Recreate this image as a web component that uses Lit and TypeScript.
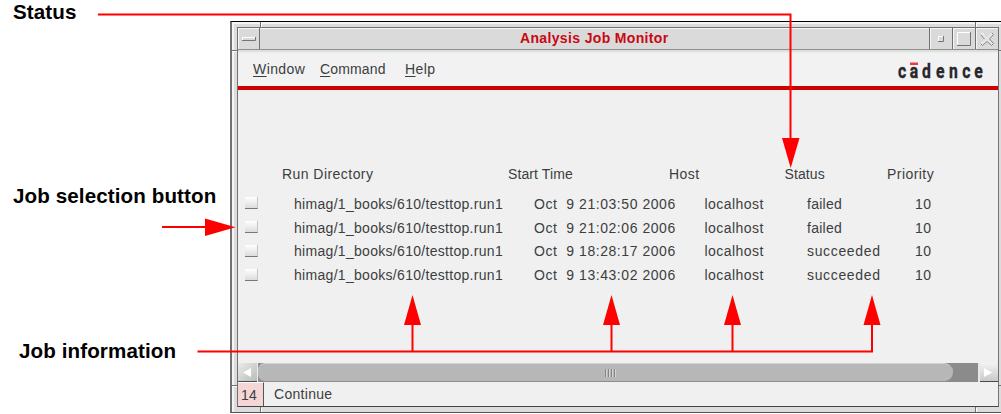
import { LitElement, html, svg, css } from "lit";
import { customElement } from "lit/decorators.js";

interface Job {
  dir: string;
  start: string;
  host: string;
  status: string;
  priority: number;
}

const JOBS: Job[] = [
  { dir: "himag/1_books/610/testtop.run1", start: "Oct  9 21:03:50 2006", host: "localhost", status: "failed", priority: 10 },
  { dir: "himag/1_books/610/testtop.run1", start: "Oct  9 21:02:06 2006", host: "localhost", status: "failed", priority: 10 },
  { dir: "himag/1_books/610/testtop.run1", start: "Oct  9 18:28:17 2006", host: "localhost", status: "succeeded", priority: 10 },
  { dir: "himag/1_books/610/testtop.run1", start: "Oct  9 13:43:02 2006", host: "localhost", status: "succeeded", priority: 10 },
];

@customElement("job-monitor")
class JobMonitor extends LitElement {
  static styles = css`
    :host {
      display: block;
      position: relative;
      box-sizing: border-box;
      height: 392px;
      border: 1px solid #555;
      border-width: 1px 0 1px 2px;
      border-top-color: #000;
      border-left-color: #707272;
      background: #dcdcdc;
      padding: 5px 2px 4px 5px;
      color: #3c3e40;
      font: 14px/16px "Liberation Sans", Arial, sans-serif;
      letter-spacing: 0.45px;
      box-shadow: inset 2px 2px 0 #f4f4f4;
    }
    .joints { position: absolute; left: 0; top: 0; }
    .inner {
      display: flex;
      position: relative;
      flex-direction: column;
      height: 380px;
      box-sizing: border-box;
      border: 1px solid #707272;
      border-bottom-color: #444;
      background: #f0f0f0;
    }
    .title {
      display: flex;
      height: 21px;
      flex: none;
      background: #d9dad9;
      border-bottom: 1px solid #8c918c;
      box-shadow: inset 1px 1px 0 #f5f5f5;
    }
    .tb {
      width: 22px;
      box-sizing: border-box;
      border-right: 1px solid #707272;
      box-shadow: inset 1px 1px 0 #f5f5f5;
    }
    .tb.r {
      width: 23px;
      border-right: 0;
      border-left: 1px solid #707272;
    }
    .tb svg { display: block; }
    .caption {
      flex: 1;
      padding-left: 260px;
      line-height: 21px;
      font-weight: bold;
      color: #c80812;
      letter-spacing: 0.35px;
      white-space: nowrap;
    }
    .menu {
      display: flex;
      height: 36px;
      flex: none;
      box-sizing: border-box;
      padding: 11px 11px 0 15px;
      background: #f2f2f3;
      box-shadow: inset 0 3px 2px -1px #dadcda;
    }
    .menu span { letter-spacing: 0.4px; }
    .window { width: 67px; }
    .command { width: 85px; }
    .menu .command { letter-spacing: 0.15px; }
    .help { flex: 1; }
    .menu u { text-underline-offset: 2px; text-decoration-thickness: 1px; }
    .logo { display: block; margin-top: -8px; overflow: visible; }
    .rule { height: 4px; flex: none; background: #cc0000; }
    .body { flex: 1; padding-top: 76px; }
    .row {
      display: grid;
      grid-template-columns: 56px 240px 170.500px 102.500px 108px 50px;
      height: 23.75px;
      align-items: center;
      white-space: pre;
    }
    .row.head {
      grid-template-columns: 44px 226px 161px 115.500px 102.500px 60px;
      height: 16px;
      margin-bottom: 10px;
    }
    .tight { letter-spacing: 0.1px; }
    .dir { letter-spacing: 0.3px; }
    .start { letter-spacing: 0.55px; }
    .status { letter-spacing: 0.65px; }
    .status.failed { letter-spacing: 0.25px; }
    .pick {
      width: 13px;
      height: 12px;
      margin: -1px 0 0 7px;
      box-sizing: border-box;
      border-bottom: 1px solid #777;
      border-right: 1px solid #c4c4c4;
      background: linear-gradient(#fff, #dcdcdc);
    }
    .scroll { display: flex; height: 19px; flex: none; background: #8b8b8b; }
    .arrow {
      width: 19px;
      box-sizing: border-box;
      border-bottom: 1px solid #454d47;
      background: linear-gradient(135deg, #e9ebe9, #b9bdb9);
    }
    .arrow.e { width: 18px; background: linear-gradient(#f3f3f3, #c8cac8); }
    .arrow svg { display: block; }
    .track { flex: 1; border-left: 1px solid #eee; border-right: 2px solid #e8e8e8; }
    .thumb {
      display: flex;
      align-items: center;
      justify-content: center;
      box-sizing: border-box;
      width: 695px;
      height: 19px;
      border-radius: 7px 9px 9px 7px;
      background: #b7b7b7;
      border-top: 1px solid #d2d2d2;
      border-bottom: 1px solid #8f8f8f;
    }
    .grip {
      width: 11px;
      height: 8px;
      margin-left: 10px;
      background: repeating-linear-gradient(90deg, #858585 0 1px, #d4d4d4 1px 2px, #b7b7b7 2px 3px);
    }
    .foot { display: flex; height: 24px; flex: none; line-height: 24px; }
    .num {
      width: 26px;
      box-sizing: border-box;
      padding-left: 3px;
      border-right: 1px solid #555;
      border-top: 1px solid #fff;
      background: #f5d6d6;
      letter-spacing: 0.2px;
    }
    .msg { padding-left: 10px; letter-spacing: 0.3px; }
  `;

  render() {
    return html`
      <svg class="joints" width="769" height="390" fill="none">
        <path d="M0 28.5H6M0 363.500H6M28.500 0V6M743.500 0V6M28.500 385V390M743.500 385V390M767 28.500H769M767 363.500H769" stroke="#707272" />
        <path d="M0 29.500H5M0 364.500H5M29.500 1V5M744.500 1V5M29.500 386V390M744.500 386V390" stroke="#fff" />
      </svg>
      <div class="inner">
        <div class="title">
          <div class="tb">
            <svg width="21" height="20" viewBox="0 0 21 20" fill="none">
              <path d="M4.500 12.500V9.500H17" stroke="#fff" /><path d="M4 12.500H17.500V9" stroke="#747676" />
            </svg>
          </div>
          <div class="caption">Analysis Job Monitor</div>
          <div class="tb r">
            <svg width="22" height="20" viewBox="0 0 22 20" fill="none">
              <path d="M8.500 13V8.500H13" stroke="#fff" /><path d="M8 13.500H13.500V8" stroke="#747676" />
            </svg>
          </div>
          <div class="tb r">
            <svg width="22" height="20" viewBox="0 0 22 20" fill="none">
              <path d="M4.500 17V4.500H17" stroke="#fff" /><path d="M4 17.500H17.500V4" stroke="#747676" />
            </svg>
          </div>
          <div class="tb r">
            <svg width="22" height="20" viewBox="0 0 22 20" fill="#e4e4e2">
              <path d="M4.500 6.500L6.500 4.500L11 8.500L15.500 4.500L17.500 6.500L13.500 11L17.500 15.500L15.500 17.500L11 13.500L6.500 17.500L4.500 15.500L8.500 11Z" stroke="#858887" />
              <path d="M4.500 6.500L6.500 4.500L11 8.500L15.500 4.500M8.500 11L4.500 15.500" stroke="#fff" fill="none" />
            </svg>
          </div>
        </div>
        <div class="menu">
          <span class="window"><u>W</u>indow</span>
          <span class="command"><u>C</u>ommand</span>
          <span class="help"><u>H</u>elp</span>
          <svg class="logo" width="90" height="32" viewBox="0 0 90 32">
            <text transform="scale(.75 1)" y="25.500" x="1.500 17 33.500 52 69.500 87 103" font-family="Roboto, sans-serif" font-weight="700" font-size="21" letter-spacing="0" fill="#27272a" stroke="#27272a" stroke-width=".4">cadence</text>
            <rect x="13" y="9.500" width="8" height="2.500" fill="#ef3a42" />
          </svg>
        </div>
        <div class="rule"></div>
        <div class="body">
          <div class="row head">
            <span></span><span>Run Directory</span><span class="tight">Start Time</span><span>Host</span><span class="tight">Status</span><span>Priority</span>
          </div>
          ${JOBS.map(
            (j) => html`<div class="row"><span class="pick"></span><span class="dir">${j.dir}</span><span class="start">${j.start}</span><span>${j.host}</span><span class="status ${j.status}">${j.status}</span><span>${j.priority}</span></div>`
          )}
        </div>
        <div class="scroll">
          <div class="arrow"><svg width="19" height="18"><path d="M5 9.500L13 5V14Z" fill="#fff" /></svg></div>
          <div class="track"><div class="thumb"><div class="grip"></div></div></div>
          <div class="arrow e"><svg width="18" height="18"><path d="M12 9.500L4 5V14Z" fill="#fff" /></svg></div>
        </div>
        <div class="foot"><div class="num">14</div><div class="msg">Continue</div></div>
      </div>
    `;
  }
}

@customElement("app-root")
class AppRoot extends LitElement {
  static styles = css`
    :host {
      display: block;
      position: relative;
      width: 1001px;
      height: 414px;
      overflow: hidden;
      background: #fff;
    }
    .page { display: grid; grid-template-columns: 230px 771px; height: 414px; }
    .labels {
      display: flex;
      flex-direction: column;
      font: bold 20.6px/24px "Liberation Sans", Arial, sans-serif;
      letter-spacing: 0.1px;
      color: #000;
      padding-left: 13px;
      white-space: nowrap;
    }
    .selection { margin-top: 160px; }
    .info { margin-top: 131px; padding-left: 6px; }
    job-monitor { margin-top: 21px; }
    .lines { position: absolute; left: 0; top: 0; }
  `;

  render() {
    const ups = [412.5, 611.5, 732.5, 872];
    return html`
      <div class="page">
        <div class="labels">
          <div>Status</div>
          <div class="selection">Job selection button</div>
          <div class="info">Job information</div>
        </div>
        <job-monitor></job-monitor>
      </div>
      <svg class="lines" width="1001" height="414" viewBox="0 0 1001 414" fill="none" stroke="#f00" stroke-width="2">
        <path d="M98 14.500H790.500V140M162 227H206M197.500 351.500H873" />
        <path d="M782 138H799.500L790.700 168ZM205 218.500V236L235.500 227.300Z" fill="#f00" stroke="none" />
        ${ups.map(
          (x) => svg`<path d="M${x} 351V324" /><path d="M${x - 8.5} 325H${x + 8.5}L${x} 295Z" fill="#f00" stroke="none" />`
        )}
      </svg>
    `;
  }
}
